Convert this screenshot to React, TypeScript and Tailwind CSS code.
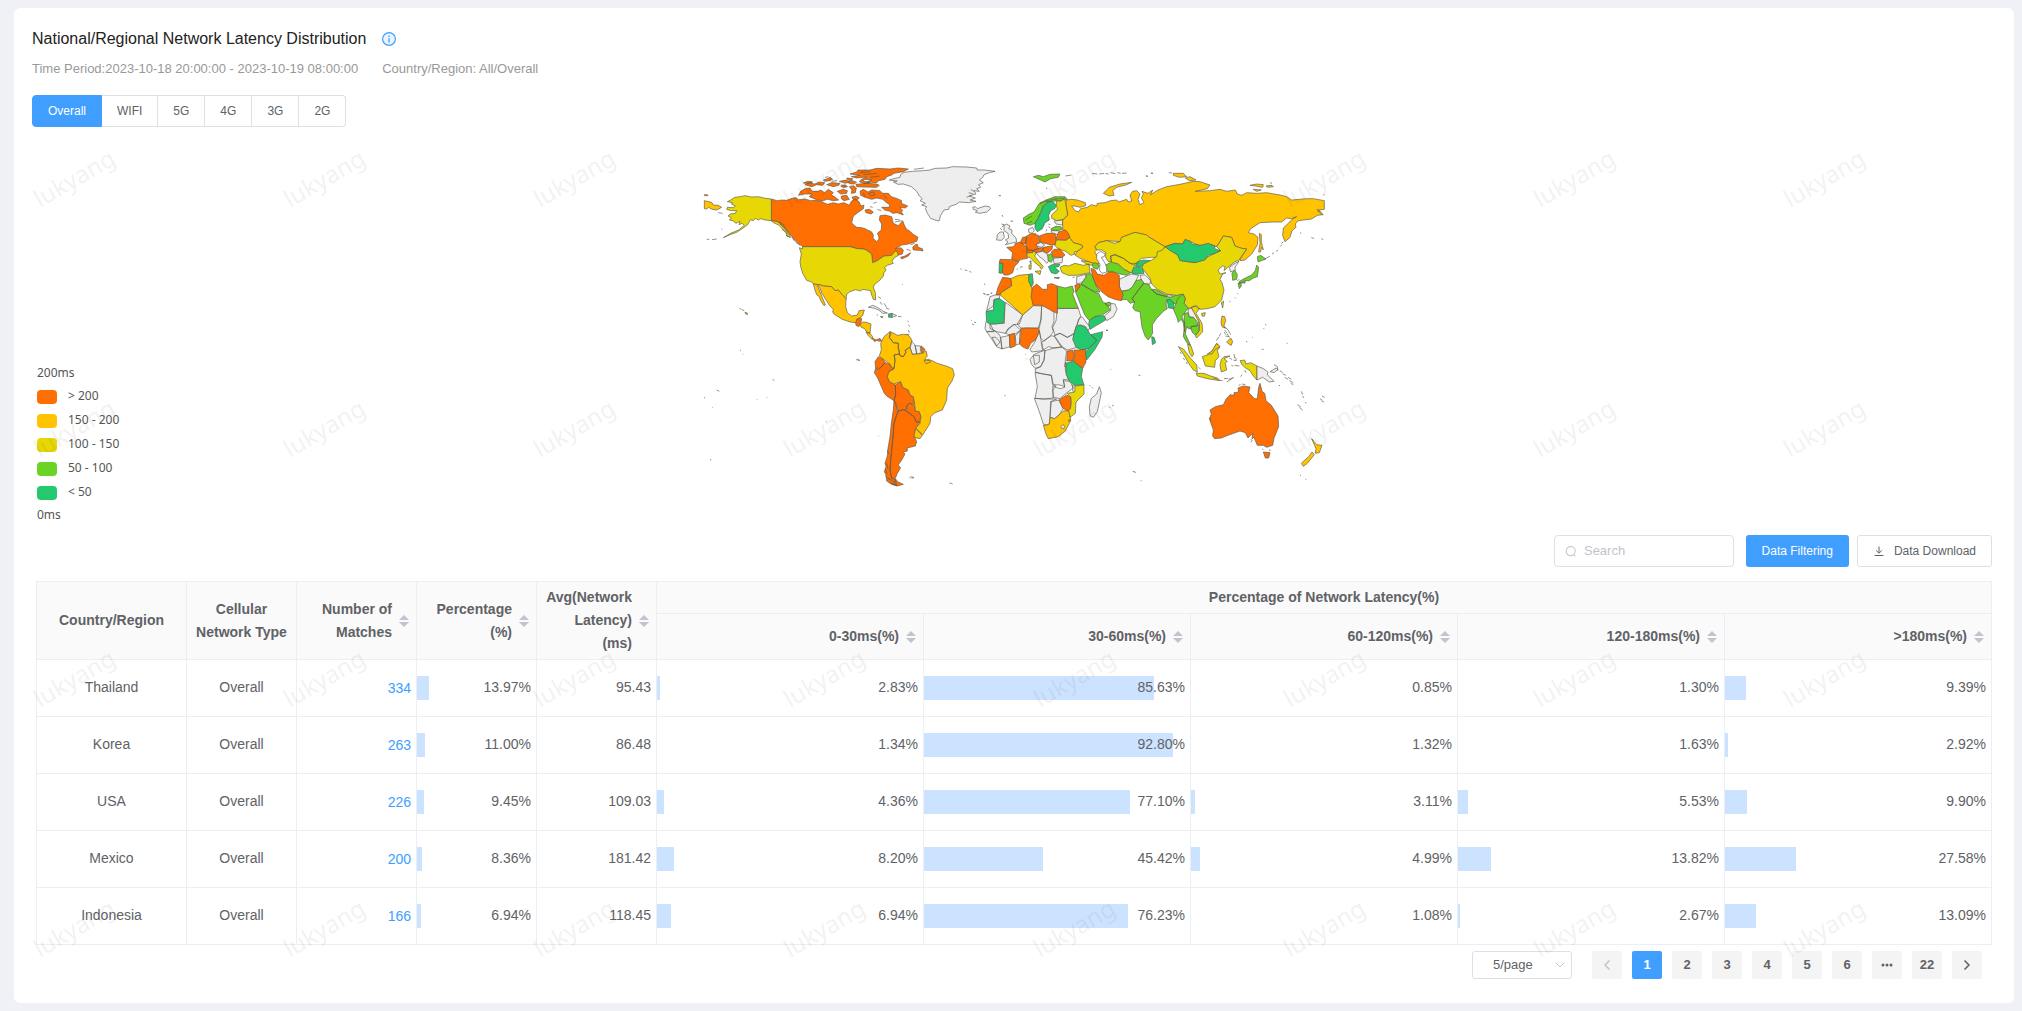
import { useState } from "react";
import { ChevronDown, ChevronLeft, ChevronRight } from "lucide-react";

const ORANGE = "#ff6e00";
const AMBER = "#ffc300";
const YELLOW = "#e6d705";
const GREEN = "#6bd226";
const TEAL = "#24c96d";
const GREY = "#eeeeee";

interface Region {
  fill: string;
  d: string[];
}

interface Row {
  country: string;
  type: string;
  matches: number;
  percentage: number;
  avg: string;
  latency: number[];
}

const networks = ["Overall", "WIFI", "5G", "4G", "3G", "2G"];

const legend = [
  { label: "> 200", color: "bg-[#ff6e00]" },
  { label: "150 - 200", color: "bg-[#ffc300]" },
  { label: "100 - 150", color: "bg-[#e6d705]" },
  { label: "50 - 100", color: "bg-[#6bd226]" },
  { label: "< 50", color: "bg-[#24c96d]" },
];

const buckets = ["0-30ms(%)", "30-60ms(%)", "60-120ms(%)", "120-180ms(%)", ">180ms(%)"];

const rows: Row[] = [
  { country: "Thailand", type: "Overall", matches: 334, percentage: 13.97, avg: "95.43", latency: [2.83, 85.63, 0.85, 1.3, 9.39] },
  { country: "Korea", type: "Overall", matches: 263, percentage: 11.0, avg: "86.48", latency: [1.34, 92.8, 1.32, 1.63, 2.92] },
  { country: "USA", type: "Overall", matches: 226, percentage: 9.45, avg: "109.03", latency: [4.36, 77.1, 3.11, 5.53, 9.9] },
  { country: "Mexico", type: "Overall", matches: 200, percentage: 8.36, avg: "181.42", latency: [8.2, 45.42, 4.99, 13.82, 27.58] },
  { country: "Indonesia", type: "Overall", matches: 166, percentage: 6.94, avg: "118.45", latency: [6.94, 76.23, 1.08, 2.67, 13.09] },
];

const americas: Region[] = [
  {
    fill: GREY,
    d: [
      "M598,90 L612,86 630,82 632,74 642,67 668,64 700,62 720,60 735,55 770,54 788,50 830,51 860,54 862,60 884,60 915,64 898,68 882,74 878,82 868,90 880,98 866,104 872,112 860,116 868,124 852,122 858,132 838,138 856,144 840,150 858,154 836,158 808,156 798,163 778,170 776,178 762,180 752,196 747,213 735,210 722,205 712,190 706,176 710,170 695,165 706,160 690,152 697,146 688,138 680,124 664,110 640,102 624,103 610,96 622,93Z",
      "M848,172 L856,170 862,176 885,168 898,170 902,176 890,186 870,190 856,187 862,182 850,178Z",
      "M664,572 L675,585 678,600 680,612 667,613 660,592 663,584Z",
      "M675,587 L692,588 691,600 695,608 680,612 678,600Z",
      "M535,472 L548,466 562,472 580,484 592,489 578,490 566,480 550,474Z",
      "M606,490 L620,497 606,502Z",
    ],
  },
  {
    fill: ORANGE,
    d: [
      "M244,147 L262,152 276,150 290,151 306,145 318,143 326,149 345,147 362,152 378,151 395,155 412,163 430,158 445,162 462,158 478,166 484,154 496,147 508,156 512,168 522,166 520,176 505,187 490,198 485,218 492,226 500,232 515,233 525,236 545,246 550,255 549,265 560,275 567,267 566,258 562,250 574,240 575,222 568,210 570,197 585,195 605,200 610,220 625,227 638,212 644,228 650,238 660,244 668,252 684,262 680,274 655,282 635,285 615,297 632,293 640,300 637,312 622,316 618,306 605,316 582,318 560,333 548,338 545,312 530,301 520,297 502,296 480,290 338,290 325,280 312,268 300,252 285,233 262,215 244,212Z",
      "M668,292 L676,284 682,283 684,292 697,296 699,303 688,301 670,300Z",
      "M632,322 L645,318 662,308 655,318 635,327Z",
      "M510,124 L520,118 534,126 545,120 570,122 578,130 595,130 604,140 622,146 635,152 634,160 653,168 646,174 630,172 638,182 634,186 640,195 622,188 608,190 600,184 584,180 575,172 596,172 600,165 590,158 578,148 560,144 545,148 525,142 512,136Z",
      "M525,180 L538,178 550,186 544,192 528,188Z",
      "M480,72 L500,66 504,60 540,60 560,55 600,57 625,54 655,57 640,65 612,70 605,75 590,80 585,88 566,92 560,98 530,96 546,89 516,88 530,81 500,84 484,80 510,76Z",
      "M498,103 L530,100 560,102 568,106 560,112 520,111 500,110Z",
      "M326,136 L332,124 345,116 360,114 366,124 384,124 392,120 404,128 415,118 430,128 424,134 436,142 446,150 430,152 412,148 396,153 380,149 358,140 366,132 344,132Z",
      "M345,104 L358,98 374,102 388,96 404,98 398,106 380,104 366,110Z",
      "M340,99 L352,94 368,96 356,101Z",
      "M400,90 L412,86 420,82 428,88 418,92 404,94Z",
      "M410,104 L425,98 450,100 446,106 430,110Z",
      "M442,124 L460,118 472,122 470,130 452,132Z",
      "M478,110 L490,107 499,114 496,128 484,130 486,120Z",
      "M454,138 L470,136 478,148 462,152 454,146Z",
      "M448,94 L470,90 478,96 466,100Z M470,84 L488,86 484,92 474,90Z",
      "M474,96 L488,92 500,97 492,102 478,101Z M486,142 L498,138 508,144 500,150 490,149Z M452,108 L466,104 472,110 460,113Z M514,88 L524,94 540,99 522,100 508,95Z M536,130 L550,126 556,134 544,138Z",
      "M497,518 L500,508 510,503 515,506 512,522 506,530 498,526Z",
      "M545,563 L558,570 570,565 575,573 568,574 560,571 554,575Z",
      "M694,588 L705,598 698,610 694,605Z",
      "M565,620 L580,628 585,638 570,655 557,655 555,635Z",
      "M557,655 L564,658 570,655 585,638 600,642 605,652 612,657 597,665 592,680 598,695 612,702 616,705 617,735 612,752 590,738 582,728 575,712 563,684 553,668Z",
      "M616,705 L632,695 638,712 655,720 660,735 670,740 674,762 658,760 650,768 648,782 640,779 625,783 617,760 612,752 617,735Z",
      "M650,768 L658,760 672,765 676,783 688,785 693,800 688,815 680,817 672,800 650,785Z",
      "M625,783 L640,779 648,782 672,800 680,817 692,815 677,835 672,858 680,875 676,888 660,892 652,893 652,903 640,906 645,912 634,932 624,945 632,953 622,970 616,985 605,985 600,960 603,920 607,880 610,850 612,820 620,795Z",
      "M612,752 L617,760 622,783 625,783 620,795 612,820 610,850 607,880 603,920 600,960 605,985 616,988 620,1008 605,1003 590,993 588,975 583,965 588,950 585,940 592,918 594,895 600,860 604,820 610,780Z",
      "M616,986 L624,996 640,1003 622,1008 612,1004Z",
    ],
  },
  {
    fill: YELLOW,
    d: [
      "M112,155 L122,150 134,142 150,140 165,137 185,141 205,140 226,145 244,147 244,212 225,210 212,206 205,210 196,205 190,212 182,209 172,225 158,235 140,247 120,254 100,263 122,250 146,240 163,226 156,220 147,224 150,214 138,220 128,212 118,210 124,203 114,198 120,192 136,190 140,182 124,182 110,178 112,172 130,173 136,168 124,162 128,158Z",
      "M244,212 L262,215 272,222 286,234 298,252 302,262 290,258 288,246 276,236 268,226 250,218Z",
      "M338,290 L480,290 502,296 520,297 530,301 545,312 548,338 560,333 582,318 605,316 616,303 622,305 625,316 612,324 606,334 610,340 592,346 584,352 588,360 582,368 580,378 570,390 553,404 550,412 556,428 557,450 550,448 544,432 542,422 530,420 518,418 512,423 497,419 480,425 470,432 468,448 455,432 445,420 435,422 425,410 400,408 392,405 370,402 365,396 350,391 338,370 332,350 330,335 334,312 328,293 338,297Z",
      "M165,487 L172,489 172,494 167,492Z",
    ],
  },
  {
    fill: AMBER,
    d: [
      "M43,152 L65,157 70,165 84,166 95,172 80,180 66,178 56,172 50,177 43,176Z",
      "M43,134 L52,134 54,137 43,137Z",
      "M370,402 L392,405 400,408 425,410 435,422 445,420 455,432 468,446 467,470 472,488 485,498 502,495 507,482 523,480 518,497 510,503 500,508 497,518 480,516 455,507 432,492 428,486 430,478 420,468 405,445 396,430 388,410 382,407 390,425 396,440 406,465 402,467 392,452 388,440 380,434 375,420Z",
      "M510,524 L518,516 530,517 543,522 540,550 530,546 524,536 514,532Z",
      "M528,546 L540,550 548,560 546,568 534,556Z",
      "M572,580 L582,560 600,545 603,552 598,562 610,578 625,580 625,597 628,600 628,612 612,615 615,630 612,655 605,652 600,642 580,628 568,618 574,600Z",
      "M600,545 L612,550 622,556 640,553 654,554 660,562 666,570 660,592 645,600 648,606 640,620 630,617 625,597 625,580 610,578 598,562Z",
      "M612,615 L628,612 630,617 640,620 648,606 645,602 660,592 667,613 680,612 698,610 708,602 712,618 704,628 712,632 722,630 742,640 768,648 788,656 793,675 785,695 772,714 770,750 757,780 735,788 722,800 720,820 698,855 677,835 690,820 693,800 688,785 676,783 674,762 670,740 660,735 655,720 638,712 632,695 612,702 598,695 592,680 597,665 612,657 615,630Z",
      "M677,835 L697,855 690,866 675,863 672,856Z",
      "M702,632 L716,627 722,636 708,641Z",
    ],
  },
  { fill: TEAL, d: ["M595,492 L606,490 606,502 596,502Z", "M571,500 L579,500 577,503Z"] },
];

// Europe, Africa, Russia and western Asia
const central: Region[] = [
  {
    fill: GREY,
    d: [
      "M72,226 L80,222 90,228 86,236 96,240 95,250 108,264 110,276 92,280 76,284 84,276 76,270 86,264 84,250 72,242Z",
      "M52,254 L60,246 70,246 73,262 65,271 50,270Z",
      "M145,238 L158,232 163,242 156,250 147,248Z",
      "M222,213 L248,210 248,225 228,222Z",
      "M213,242 L235,242 242,248 232,254 217,252Z",
      "M168,282 L182,277 194,285 184,292 170,288Z",
      "M168,308 L188,304 200,310 205,320 205,335 200,340 192,330 178,320Z",
      "M220,325 L248,322 246,338 222,341Z",
      "M418,388 L440,378 455,372 476,376 468,392 458,410 446,420 420,424 418,408Z",
      "M480,376 L495,374 512,392 510,402 492,402 484,390Z",
      "M290,380 L316,373 318,382 305,398 290,402Z",
      "M392,460 L405,462 411,478 400,500 380,512 373,498 392,482Z",
      "M30,440 L48,434 60,434 58,445 42,448 40,468 20,482 25,462Z",
      "M75,456 L128,495 118,522 98,524 84,540 76,550 50,545 30,535 30,522 73,520Z",
      "M128,495 L160,467 185,468 182,510 175,534 140,534 122,534 112,522Z",
      "M185,466 L210,475 222,488 222,515 216,530 220,545 212,556 192,574 182,564 177,538 184,505Z",
      "M232,476 L295,475 302,498 290,525 282,550 262,562 240,550 225,556 218,532 228,512Z",
      "M222,557 L240,550 262,562 282,552 280,568 292,592 262,600 240,586Z",
      "M185,576 L215,557 225,560 246,590 222,594 205,590 190,600Z",
      "M295,508 L306,500 330,532 324,542 314,528 292,526Z",
      "M195,602 L222,594 246,592 260,603 256,630 256,660 266,690 250,688 254,710 240,705 220,704 214,676 190,672 168,668 165,658 182,650 192,630Z",
      "M150,628 L164,612 180,606 195,600 192,630 182,650 165,655 154,642Z",
      "M160,616 L178,616 178,636 164,644Z",
      "M150,598 L165,575 178,542 182,564 184,578 188,602 155,606Z",
      "M106,558 L120,542 118,582 108,585Z",
      "M76,550 L84,536 104,524 122,540 106,552 88,554Z",
      "M62,562 L88,556 90,590 66,597Z",
      "M20,545 L45,543 60,556 66,597 50,590 36,568Z",
      "M36,562 L48,562 60,576 50,588Z",
      "M18,514 L32,524 42,545 20,545 15,535Z",
      "M165,666 L190,672 214,676 218,704 228,708 218,720 220,744 190,747 165,745 172,710Z",
      "M218,708 L240,716 254,712 250,692 270,694 280,714 258,730 240,746 220,742Z",
      "M278,704 L286,708 288,728 292,742 284,738 278,720Z",
      "M163,745 L190,747 230,747 214,754 210,800 208,822 198,825 190,822 178,785Z",
      "M212,755 L237,750 250,775 238,794 224,806 210,802Z",
      "M358,710 L364,728 352,785 340,802 330,797 328,770 334,745 350,732Z",
      "M255,638 L262,640 260,652 254,650Z",
    ],
  },
  {
    fill: AMBER,
    d: [
      "M258,150 L275,148 292,150 316,158 317,167 300,172 284,168 275,168 285,182 296,186 302,176 322,172 334,164 350,168 352,160 375,158 392,152 410,150 416,156 440,148 445,156 455,153 450,135 458,124 470,122 480,132 474,148 480,164 492,158 484,144 490,132 486,124 504,130 518,120 512,134 534,120 560,110 600,103 640,94 660,95 690,105 682,116 646,124 690,122 720,118 740,124 766,120 772,132 785,136 800,128 830,130 860,128 900,135 920,140 935,150 980,146 1000,146 1033,152 1033,178 1015,180 1030,194 1012,196 995,207 955,212 946,222 948,232 936,242 930,262 915,275 908,256 910,234 925,220 936,208 950,200 934,206 920,204 905,216 880,216 840,218 812,236 805,248 822,252 834,262 832,285 815,312 795,330 780,332 782,325 800,297 785,295 765,288 755,262 730,258 720,275 710,290 690,283 660,287 635,277 615,270 608,282 585,280 555,290 530,275 505,260 500,255 465,247 425,262 420,275 380,272 355,278 345,290 350,300 344,305 352,320 358,342 340,340 325,335 300,325 285,315 290,306 308,292 305,285 280,278 268,262 262,245 248,238 248,212 250,208 263,195 258,165Z",
      "M370,130 L388,112 420,102 455,97 440,104 410,112 398,122 402,136 388,138Z",
      "M60,434 L62,428 95,408 92,386 115,376 146,373 148,395 156,418 158,442 160,467 128,495Z",
      "M190,825 L198,826 208,822 210,802 224,806 238,794 250,783 268,782 272,812 256,843 235,860 205,866 198,852Z",
    ],
  },
  {
    fill: GREEN,
    d: [
      "M130,204 L148,192 162,186 178,160 198,150 225,140 255,140 262,148 240,152 225,153 205,155 190,168 182,188 174,206 165,220 150,226 132,220Z",
      "M160,80 L176,76 190,80 210,73 240,72 235,82 212,86 195,96 182,90Z",
      "M215,235 L228,229 243,230 247,238 235,242 213,240Z",
      "M203,315 L213,311 220,325 214,337 205,332Z",
      "M336,342 L345,338 358,346 352,358 340,354Z",
      "M376,346 L395,335 415,342 430,356 452,368 440,376 420,372 400,366 384,366Z",
      "M424,424 L446,420 458,410 468,392 484,388 492,400 480,414 465,434 456,446 464,456 450,460 440,448 420,450 430,436Z",
      "M490,400 L506,403 514,418 530,432 560,440 582,438 602,430 610,434 598,450 592,464 580,460 560,450 558,462 562,476 550,484 530,505 517,524 518,550 505,570 496,560 486,532 480,485 466,482 458,474 464,456 456,446 465,434 480,414Z",
      "M514,418 L526,418 560,436 560,440 530,432Z",
      "M303,402 L318,382 318,374 332,370 342,386 348,405 360,426 345,426 325,415Z",
      "M286,424 L303,402 325,415 345,428 356,430 368,455 384,466 390,480 365,496 345,500 328,512 314,494 300,460Z",
      "M374,460 L390,456 392,464 384,470Z",
      "M232,408 L255,414 277,408 282,424 278,432 295,475 232,475Z",
    ],
  },
  {
    fill: TEAL,
    d: [
      "M165,235 L165,220 174,206 182,188 190,168 205,155 218,154 229,166 224,176 212,182 206,196 208,210 195,218 187,236 172,245Z",
      "M58,338 L69,340 67,370 57,369Z",
      "M205,350 L216,344 240,342 236,350 224,352 238,364 228,372 214,368Z M222,383 L238,382 236,386Z",
      "M468,336 L490,330 519,333 502,345 478,350 460,346Z",
      "M455,356 L468,350 488,354 492,370 470,373 456,370Z",
      "M561,450 L570,448 580,456 582,476 566,474Z",
      "M515,560 L522,562 527,578 517,584Z",
      "M328,512 L345,500 372,497 377,510 350,526 330,538 326,522Z",
      "M42,450 L58,445 75,458 71,518 48,522 30,522 20,514 18,484 40,480Z",
      "M147,373 L157,371 160,400 155,410 146,394Z",
      "M288,530 L300,524 318,532 330,552 350,571 325,596 304,600 288,592 278,568Z",
      "M332,554 L368,545 366,562 345,598 320,630 316,606 328,595 350,571Z",
      "M258,640 L280,633 308,655 304,680 312,705 285,706 268,694 258,672Z",
      "M378,540 L383,540 381,543Z",
    ],
  },
  {
    fill: YELLOW,
    d: [
      "M230,152 L240,154 254,147 258,165 263,195 250,208 230,212 215,205 215,195 232,178 229,164Z",
      "M138,314 L155,303 170,307 164,318 178,336 190,350 184,358 180,350 165,338 150,322 140,322Z",
      "M165,364 L183,362 180,374Z M147,345 L154,344 153,358 147,357Z M149,334 L153,332 153,342Z",
      "M222,284 L230,270 260,270 268,262 280,278 305,285 308,292 292,304 282,306 285,312 272,316 262,308 255,303 245,300 232,294Z",
      "M240,352 L252,346 266,348 285,340 310,346 327,342 330,368 310,372 290,376 265,376 246,368Z",
      "M303,332 L325,335 342,340 334,346 320,342Z",
      "M345,290 L355,278 380,272 404,280 420,275 425,262 465,247 500,255 505,260 530,275 555,290 548,300 545,308 530,322 515,322 485,325 462,345 450,340 430,325 405,315 392,318 394,335 384,334 375,318 378,308 365,300 350,300Z",
      "M392,318 L405,313 430,325 450,340 474,340 462,350 455,368 448,366 430,356 415,342 394,336Z",
      "M285,708 L312,705 312,732 288,756 286,790 270,802 266,782 274,760 272,742 262,730 284,726Z",
    ],
  },
  {
    fill: ORANGE,
    d: [
      "M228,264 L236,246 255,240 265,250 270,262 258,270 228,268Z",
      "M178,258 L200,250 225,250 228,268 226,284 210,284 182,277Z",
      "M140,258 L155,250 175,256 180,277 168,284 176,296 158,302 142,300 137,280Z",
      "M122,275 L128,262 140,260 137,282 124,280Z",
      "M80,292 L102,290 106,280 120,276 142,292 140,310 142,325 125,328 115,333 95,327 98,308Z",
      "M60,328 L95,329 117,335 103,350 98,368 85,375 72,375 67,365 70,340 58,338Z",
      "M142,300 L157,300 158,308 140,308Z",
      "M158,302 L176,294 190,293 188,303 168,307Z",
      "M190,292 L218,287 216,298 202,310 190,304Z",
      "M214,306 L222,298 240,297 255,315 246,322 220,322Z",
      "M333,355 L345,360 352,372 372,376 386,366 400,366 418,376 418,408 428,432 424,452 404,448 384,440 366,426 348,405 338,380Z",
      "M284,406 L298,402 300,410 288,425Z",
      "M68,382 L92,385 95,406 64,427 60,434 48,435 54,412Z",
      "M158,412 L170,402 188,418 202,418 202,404 216,401 232,408 232,490 222,486 186,466 160,466 153,440Z",
      "M122,536 L140,534 175,535 178,546 166,570 152,580 144,597 130,592 118,582 122,560Z",
      "M88,554 L104,550 106,588 90,594Z",
      "M282,600 L300,600 318,598 316,606 318,636 308,655 280,633 285,615Z",
      "M262,603 L278,600 283,615 278,632 260,633Z",
      "M237,750 L260,735 272,742 272,775 262,783 248,774Z",
    ],
  },
];

// East and South-East Asia, Oceania
const east: Region[] = [
  {
    fill: YELLOW,
    d: [
      "M135,290 L125,302 112,305 110,320 95,330 70,342 66,354 76,366 90,385 95,402 112,418 140,432 170,436 190,432 196,446 192,460 205,476 225,468 240,478 262,476 285,470 305,450 312,420 306,398 300,388 308,372 318,368 300,372 294,360 308,348 315,350 312,362 326,350 345,335 358,330 362,322 380,297 365,295 345,288 335,262 310,258 300,275 290,290 302,302 280,312 255,325 225,338 185,332 170,312 150,300Z",
      "M304,458 L311,453 308,474Z",
      "M245,490 L256,488 253,499 246,498Z",
      "M214,472 L230,467 238,476 228,490 246,520 248,545 230,564 226,558 238,542 238,516 220,488Z",
      "M203,582 L213,588 221,612 216,620 208,608Z",
      "M175,590 L190,597 212,625 230,645 232,667 220,660 206,640 190,612Z",
      "M228,670 L252,670 272,678 292,684 300,692 262,686 232,678Z",
      "M247,620 L264,614 278,600 290,580 300,590 292,602 297,620 286,632 284,652 256,648Z",
      "M304,628 L312,620 330,618 312,626 322,634 316,640 320,660 304,666 300,646Z",
      "M360,632 L374,630 378,642 392,638 411,648 411,690 400,678 390,662 374,652 366,644Z",
    ],
  },
  {
    fill: TEAL,
    d: ["M135,290 L165,280 188,282 195,268 212,274 216,282 240,286 265,280 285,288 284,296 302,302 280,312 265,316 255,330 225,338 180,332 172,314 154,304Z"],
  },
  {
    fill: GREY,
    d: [
      "M328,352 L345,340 357,334 345,352 346,360 332,366Z",
      "M204,478 L214,474 222,488 236,514 236,524 226,520 220,502 207,500Z",
      "M411,648 L430,656 444,666 442,674 462,694 448,696 428,682 411,690Z",
      "M450,665 L468,654 474,658 462,668Z",
      "M140,434 L158,436 156,441 144,441Z",
    ],
  },
  {
    fill: GREEN,
    d: [
      "M336,370 L344,360 352,374 350,388 338,391Z",
      "M412,320 L422,316 438,327 424,332 414,336Z",
      "M410,345 L416,352 412,380 400,384 388,392 374,392 358,402 358,394 380,382 394,376 406,362Z",
      "M354,400 L363,397 364,408 358,416Z M366,398 L376,394 374,400Z",
      "M188,432 L196,446 192,460 205,474 192,490 186,500 194,520 194,545 190,520 184,508 175,517 170,500 160,478 168,462 172,448Z",
      "M192,490 L204,488 208,502 220,502 234,518 230,528 212,530 212,538 200,530 196,552 212,586 202,580 190,560 194,520Z",
      "M213,530 L238,526 236,544 226,556 216,546Z",
    ],
  },
  {
    fill: AMBER,
    d: [
      "M418,250 L424,254 424,276 430,300 424,292 422,306 416,306 420,280Z",
      "M160,70 L190,70 200,80 178,82 160,76Z M196,84 L210,80 228,90 208,92Z M390,106 L410,102 430,104 428,112 406,108Z M438,108 L456,106 460,110 444,112Z M400,118 L424,120 410,124Z",
      "M303,518 L306,498 314,500 317,512 312,526 316,534 306,530Z",
      "M320,576 L332,564 338,574 334,586 326,582Z",
      "M275,604 L290,581 300,590 284,600 276,612 262,612Z",
      "M575,866 L590,884 606,886 598,908 586,910 588,896Z",
      "M576,906 L583,914 562,940 550,949 544,940 566,920Z",
    ],
  },
  {
    fill: ORANGE,
    d: [
      "M270,780 L286,770 310,764 318,748 330,734 342,736 342,728 356,726 354,714 370,708 390,711 386,728 404,746 412,746 416,712 420,700 426,724 434,730 438,752 454,766 474,798 476,830 462,864 458,886 440,892 430,886 412,886 402,862 396,866 398,850 384,864 376,848 360,843 324,856 304,864 284,866 278,858 280,840 268,806 274,792Z",
      "M430,906 L450,908 446,924 436,924Z",
    ],
  },
];

const americasIslands =
  "M50,269 l8,-2 M66,269 l14,-2 M84,188 l14,2 M94,237 l3,1 M148,475 l6,3 M156,479 l7,3 M150,600 l3,2 M158,612 l2,1 M248,687 l4,5 M80,720 l8,4 M42,742 l3,2 M66,772 l2,0 M200,748 l2,0 M230,742 l2,0 M498,630 l6,-3 5,4 -6,1 M60,928 l4,2 M564,857 l2,2 M407,815 l3,1 M658,984 l6,-4 8,3 -8,2 M778,1000 l4,-1 6,4 M811,356 l4,2 M824,360 l8,2 M838,364 l6,3 M637,403 l2,1 M880,430 l6,3 M890,434 l6,0 M902,432 l3,-4 M842,510 l3,2 M852,516 l6,2 M846,522 l6,2 M944,736 l2,1 M926,137 l6,0 M936,196 l3,2 M964,212 l5,3 M565,440 l8,6 M570,456 l6,8 M582,460 l8,12 M588,474 l10,4 M624,499 l10,1 M652,512 l4,4 M656,524 l2,6 M655,540 l3,8 M650,555 l8,-3 M560,494 l4,2 M830,142 l12,-6 M836,128 l14,4 M842,118 l10,6 M672,58 l30,-4 M270,222 l16,14 M276,238 l20,16 M288,256 l12,6 M306,262 l8,12 M316,276 l14,10 M594,985 l18,10 M598,996 l14,8 M590,940 l4,16 M586,955 l6,18 M405,82 l10,-2 M425,94 l16,-2 M454,104 l14,6 M550,160 l10,-4 M562,178 l12,4 M615,208 l14,2 M615,216 l20,-4 M540,170 l8,2 M650,298 l12,4 M662,284 l12,-4 M592,900 l4,12 M586,978 l12,10 M602,1000 l16,4 M266,214 l18,12 M280,230 l14,18 M512,68 l30,-3 M520,74 l40,-4 M540,82 l30,-4 M520,128 l4,12 M580,136 l12,10";

const centralIslands =
  "M336,70 l16,2 M358,72 l14,-2 M376,70 l10,3 M392,68 l14,3 M412,68 l10,2 M426,70 l14,-1 M256,78 l18,-3 M198,115 l4,0 M58,137 l4,0 M66,197 l3,3 M92,212 l4,3 M64,222 l8,2 -6,8 M60,234 l6,6 M498,78 l5,0 M512,70 l6,-2 M10,430 l6,4 M20,434 l8,0 M34,428 l2,4 M12,402 l4,1 M328,706 l3,2 M336,712 l3,3 M388,772 l3,1 M396,768 l5,-2 M74,737 l2,0 M392,658 l2,0 M478,676 l3,0 M136,612 l2,2 M138,626 l2,2 M120,352 l8,-2 M110,358 l4,-2 M278,383 l6,-2 M205,230 l6,4 M205,222 l6,2 M198,244 l3,-6 M160,252 l8,-2 M264,810 l6,0 -2,4 -4,-1 M136,210 l20,-12 M140,220 l16,-6 M180,160 l24,-8 M200,152 l30,-6 M225,148 l30,-4";

const eastIslands =
  "M78,78 l6,1 M94,70 l5,1 M146,68 l10,1 M450,98 l6,2 M540,248 l4,2 M574,262 l8,4 M604,266 l6,3 M610,136 l4,-3 M436,326 l14,-8 M456,312 l6,-4 M468,304 l6,-4 M480,290 l6,-6 M484,280 l6,-4 M352,430 l3,2 M344,442 l3,3 M328,456 l4,-3 M358,388 l-6,4 M436,522 l2,4 M430,535 l3,1 M500,580 l3,0 M396,562 l2,0 M378,574 l4,2 M425,598 l6,0 M310,532 l12,4 M314,540 l8,10 M320,536 l8,8 M312,546 l6,8 M322,552 l6,10 M326,544 l6,10 M316,558 l12,2 M289,572 l8,-12 M298,558 l5,-8 M202,530 l4,8 M342,612 l2,12 M346,622 l4,10 M340,630 l8,2 M334,646 l6,2 M344,646 l14,2 M328,624 l8,4 M280,684 l14,4 M298,690 l10,2 M312,686 l12,-1 M320,696 l22,-14 M326,688 l12,-4 M362,680 l4,-6 M374,660 l4,8 M180,606 l4,6 M190,624 l4,6 M198,636 l4,6 M236,652 l6,6 M462,644 l10,6 2,12 M480,662 l8,6 M488,672 l10,4 M494,682 l10,6 M504,682 l10,6 M508,692 l12,6 M512,700 l8,4 M476,706 l4,1 M544,724 l4,10 M548,738 l4,6 M556,756 l2,4 M532,764 l10,6 M538,772 l10,8 M600,746 l6,4 M606,738 l8,4 M604,752 l8,4 M38,964 l8,2 -2,3 M62,992 l3,0 M540,976 l3,0 M556,988 l3,0 M56,676 l3,0 M426,896 l4,4 M448,898 l3,5 M392,868 l6,4 M396,874 l-4,2 M356,706 l6,-2 M366,702 l10,2 M270,804 l3,8 M590,178 l12,6 M592,182 l14,10";

function RegionGroup({ regions, islands, offset }: { regions: Region[]; islands: string; offset: number }) {
  return (
    <g transform={`translate(${offset} 0)`}>
      {regions.map((region) => (
        <path key={region.fill} d={region.d.join(" ")} fill={region.fill} />
      ))}
      <path d={islands} fill="none" />
    </g>
  );
}

function WorldMap() {
  return (
    <svg
      viewBox="-6 0 1956 1050"
      className="w-[652px] h-[350px]"
      role="img"
      aria-label="Network latency by country"
      stroke="#5f5a50"
      strokeWidth="2"
      strokeLinejoin="round"
    >
      <RegionGroup regions={americas} islands={americasIslands} offset={0} />
      <RegionGroup regions={central} islands={centralIslands} offset={870} />
      <RegionGroup regions={east} islands={eastIslands} offset={1290} />
      {/* Caspian Sea and Lesotho */}
      <g transform="translate(870 0)" fill="#ffffff">
        <path d="M350,312 L362,304 376,312 372,320 364,322 374,338 380,352 380,366 366,370 358,360 360,344 350,326Z" />
        <path d="M246,836 L243,830 249,824 255,829 251,836Z" fill={GREY} />
      </g>
    </svg>
  );
}

function Watermark() {
  return (
    <svg className="absolute inset-0 w-full h-full pointer-events-none" aria-hidden="true">
      <defs>
        <pattern id="watermark" width="250" height="250" patternUnits="userSpaceOnUse">
          <text
            x="40"
            y="208"
            transform="rotate(-30 40 208)"
            className="text-2xl font-['Noto_Sans',sans-serif]"
            fill="#000000"
            fillOpacity="0.05"
          >
            lukyang
          </text>
        </pattern>
      </defs>
      <rect width="100%" height="100%" fill="url(#watermark)" />
    </svg>
  );
}

function SortHeader({ lines }: { lines: string[] }) {
  return (
    <div className="flex items-center justify-end">
      <span>
        {lines.map((line) => (
          <span key={line} className="block">{line}</span>
        ))}
      </span>
      <button type="button" aria-label={`Sort by ${lines.join(" ")}`} className="w-6 flex justify-center">
        <svg width="10" height="12" viewBox="0 0 10 12" fill="#c0c4cc">
          <path d="M5 0 L10 5 H0Z M0 7 H10 L5 12Z" />
        </svg>
      </button>
    </div>
  );
}

function BarCell({ value }: { value: number }) {
  return (
    <td className="relative border-r border-b border-[#ebeef5] pr-[5px] pb-0.5 text-right">
      <div
        className="absolute left-0 top-4 h-6 bg-[#cce3ff]"
        style={{ width: `max(0px, calc(${value * 1.03}% - 5px))` }}
      />
      <span className="relative">{value.toFixed(2)}%</span>
    </td>
  );
}

export default function App() {
  const [network, setNetwork] = useState("Overall");
  const [page, setPage] = useState(1);
  const [search, setSearch] = useState("");

  const th = "border-r border-b border-[#ebeef5] bg-[#fafafa] font-bold";
  const td = "border-r border-b border-[#ebeef5]";
  const pager = "w-[30px] h-7 rounded-xs flex items-center justify-center";

  return (
    <div className="relative min-h-screen bg-[#f0f1f6] pt-2 pb-2 pl-[14px] pr-2 font-['Liberation_Sans',Arial,sans-serif] text-[#606266]">
      <div className="bg-white rounded-md px-[18px] pt-[21px] pb-6">
        <div className="flex items-center gap-4 leading-5">
          <h1 className="text-base leading-5 text-[#222222]">National/Regional Network Latency Distribution</h1>
          <svg width="14" height="14" viewBox="0 0 14 14" fill="none" stroke="#409eff" aria-label="Info" role="img">
            <circle cx="7" cy="7" r="6.4" fill="#e8f4ff" strokeWidth="1.2" />
            <path d="M7 6.2 V10.4 M7 3.6 V4.9" strokeWidth="1.3" />
          </svg>
        </div>
        <div className="mt-2.5 flex gap-6 text-[13px] leading-5 text-[#999999]">
          <span>Time Period:2023-10-18 20:00:00 - 2023-10-19 08:00:00</span>
          <span>Country/Region: All/Overall</span>
        </div>

        <div className="mt-4 flex text-xs">
          {networks.map((item) => (
            <button
              key={item}
              type="button"
              onClick={() => setNetwork(item)}
              className={`h-8 border border-l-0 px-[15px] first:border-l first:rounded-l last:rounded-r ${
                network === item ? "bg-[#409eff] border-[#409eff] text-white" : "bg-white border-[#dcdfe6]"
              }`}
            >
              {item}
            </button>
          ))}
        </div>

        <div className="px-1">
          <div className="grid grid-cols-[1fr_auto_1fr] pt-[23px]">
            <div className="self-end pl-px font-['Noto_Sans',sans-serif] text-xs text-[#555555]">
              <div className="h-6 leading-6">200ms</div>
              {legend.map((item) => (
                <div key={item.label} className="flex h-6 items-center gap-[11px]">
                  <span className={`w-5 h-3.5 rounded ${item.color}`} />
                  <span className="pb-0.5">{item.label}</span>
                </div>
              ))}
              <div className="h-5 leading-5">0ms</div>
            </div>
            <div className="pb-[25px]">
              <WorldMap />
            </div>
          </div>

          <div className="mt-2.5 flex justify-end">
            <label className="flex h-8 w-[180px] items-center gap-2 rounded border border-[#dcdfe6] px-2.5">
              <svg width="13" height="13" viewBox="0 0 13 13" fill="none" stroke="#c0c4cc" strokeWidth="1.2">
                <circle cx="6.5" cy="6" r="5.2" />
                <path d="M9.8 10 L11.8 12" />
              </svg>
              <input
                type="text"
                aria-label="Search"
                placeholder="Search"
                value={search}
                onChange={(e) => setSearch(e.target.value)}
                className="w-full min-w-0 text-[13px] outline-none placeholder:text-[#c0c4cc]"
              />
            </label>
            <button type="button" className="ml-3 h-8 rounded-[3px] bg-[#409eff] px-4 text-xs text-white">
              Data Filtering
            </button>
            <button
              type="button"
              className="ml-2 flex h-8 items-center gap-[9px] rounded-[3px] border border-[#dcdfe6] px-[15px] text-xs"
            >
              <svg width="12" height="12" viewBox="0 0 12 12" fill="none" stroke="#606266">
                <path d="M6 1.5 V8 M3.2 5.5 L6 8.2 L8.8 5.5 M1.5 10.5 H10.5" />
              </svg>
              Data Download
            </button>
          </div>

          <table className="mt-3.5 w-full table-fixed border-separate border-spacing-0 border-t border-l border-[#ebeef5] text-sm leading-[23px]">
            <colgroup>
              <col className="w-[150px]" />
              <col className="w-[110px]" />
              <col className="w-[120px]" />
              <col className="w-[120px]" />
              <col className="w-[120px]" />
              <col />
              <col />
              <col />
              <col />
              <col />
            </colgroup>
            <thead>
              <tr className="h-8">
                <th rowSpan={2} className={th}>Country/Region</th>
                <th rowSpan={2} className={th}>
                  Cellular
                  <br />
                  Network Type
                </th>
                <th rowSpan={2} className={`${th} text-right`}>
                  <SortHeader lines={["Number of", "Matches"]} />
                </th>
                <th rowSpan={2} className={`${th} text-right`}>
                  <SortHeader lines={["Percentage", "(%)"]} />
                </th>
                <th rowSpan={2} className={`${th} text-right`}>
                  <SortHeader lines={["Avg(Network", "Latency)", "(ms)"]} />
                </th>
                <th colSpan={5} className={th}>Percentage of Network Latency(%)</th>
              </tr>
              <tr className="h-[46px]">
                {buckets.map((bucket) => (
                  <th key={bucket} className={`${th} text-right`}>
                    <SortHeader lines={[bucket]} />
                  </th>
                ))}
              </tr>
            </thead>
            <tbody>
              {rows.map((row) => (
                <tr key={row.country} className="h-[57px]">
                  <td className={`${td} pb-0.5 text-center`}>{row.country}</td>
                  <td className={`${td} pb-0.5 text-center`}>{row.type}</td>
                  <td className={`${td} pr-[5px] text-right`}>
                    <a href="#matches" className="text-[#409eff]">{row.matches}</a>
                  </td>
                  <BarCell value={row.percentage} />
                  <td className={`${td} pr-[5px] pb-0.5 text-right`}>{row.avg}</td>
                  {row.latency.map((value, i) => (
                    <BarCell key={buckets[i]} value={value} />
                  ))}
                </tr>
              ))}
            </tbody>
          </table>

          <div className="mt-1.5 flex justify-end gap-2.5 pr-2.5 text-[13px] font-bold">
            <div className="relative mr-2.5 font-normal">
              <select
                aria-label="Rows per page"
                className="h-7 w-[100px] appearance-none rounded-[3px] border border-[#dcdfe6] bg-white pl-5 outline-none"
              >
                <option>5/page</option>
                <option>10/page</option>
                <option>20/page</option>
              </select>
              <ChevronDown size={16} strokeWidth={1.5} className="absolute right-1 top-1.5 text-[#c0c4cc] pointer-events-none" />
            </div>
            <button type="button" aria-label="Previous page" disabled className={`${pager} bg-[#f4f4f5] text-[#c0c4cc]`}>
              <ChevronLeft size={16} strokeWidth={2.5} />
            </button>
            {[1, 2, 3, 4, 5, 6].map((n) => (
              <button
                key={n}
                type="button"
                onClick={() => setPage(n)}
                className={`${pager} ${page === n ? "bg-[#409eff] text-white" : "bg-[#f4f4f5]"}`}
              >
                {n}
              </button>
            ))}
            <button type="button" aria-label="More pages" className={`${pager} bg-[#f4f4f5]`}>
              <svg width="12" height="4" viewBox="0 0 12 4" fill="#606266">
                <circle cx="2" cy="2" r="1.5" />
                <circle cx="6" cy="2" r="1.5" />
                <circle cx="10" cy="2" r="1.5" />
              </svg>
            </button>
            <button type="button" onClick={() => setPage(22)} className={`${pager} bg-[#f4f4f5]`}>
              22
            </button>
            <button type="button" aria-label="Next page" className={`${pager} bg-[#f4f4f5]`}>
              <ChevronRight size={16} strokeWidth={2.5} />
            </button>
          </div>
        </div>
      </div>
      <Watermark />
    </div>
  );
}
